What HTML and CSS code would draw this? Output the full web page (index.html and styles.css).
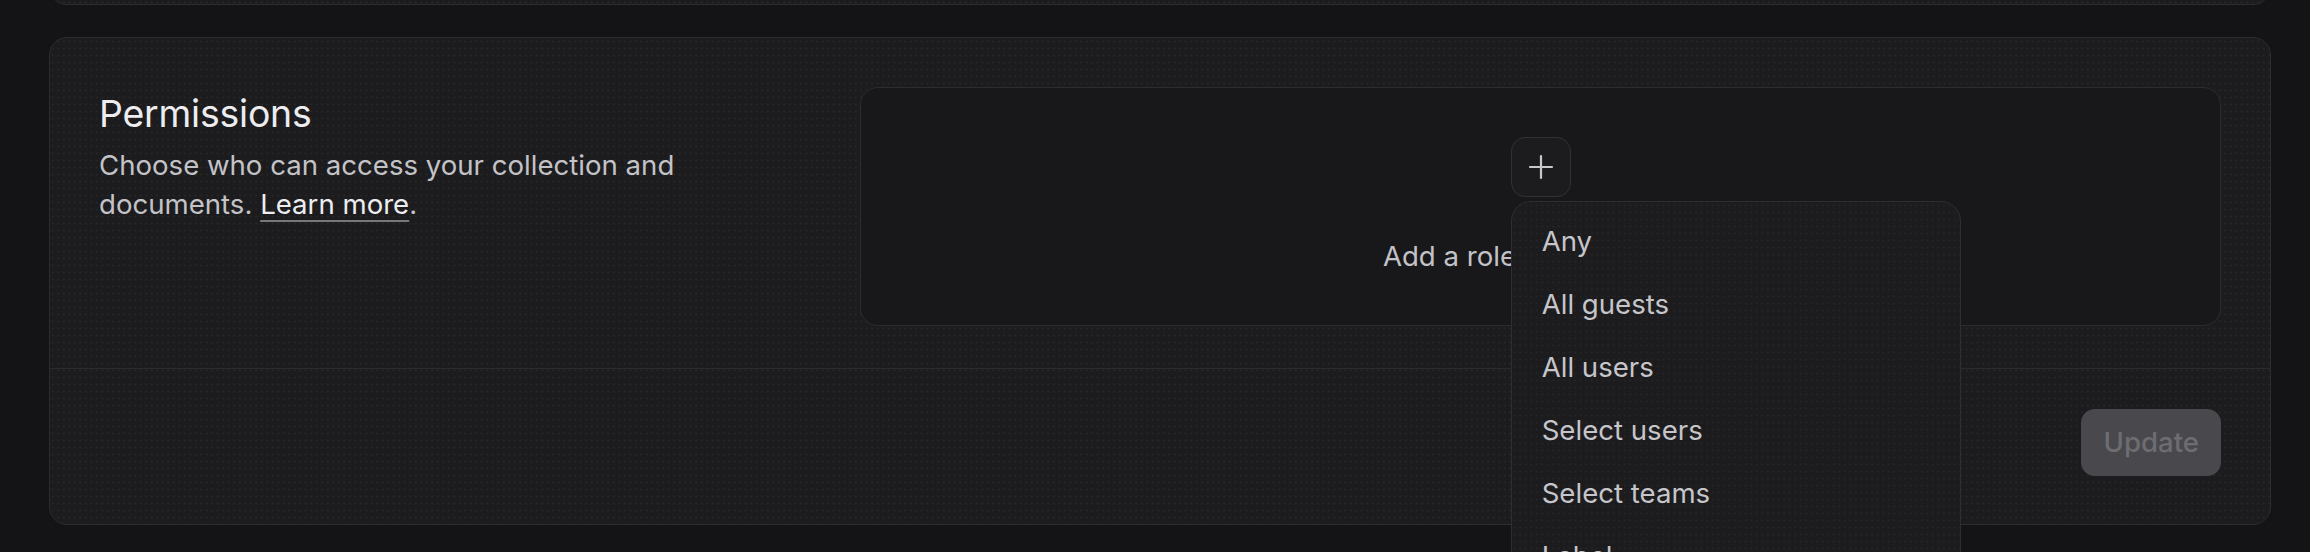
FILE: index.html
```html
<!DOCTYPE html>
<html lang="en">
<head>
<meta charset="utf-8">
<title>Permissions</title>
<link rel="stylesheet" href="styles.css">
</head>
<body>
<div class="page">
  <div class="card card-prev"></div>
  <section class="card">
    <div class="card-body">
      <div class="intro">
        <h2 class="title">Permissions</h2>
        <p class="desc">Choose who can access your collection and documents. <a class="link" href="#">Learn more</a>.</p>
      </div>
      <div class="roles">
        <div class="add-wrap">
          <button class="add-btn" type="button" aria-label="Add role">
            <svg class="plus" viewBox="0 0 28 28" width="28" height="28"><path d="M14 3v22M3 14h22" stroke="currentColor" stroke-width="2.2" stroke-linecap="round" fill="none"/></svg>
          </button>
          <ul class="menu">
            <li class="menu-item">Any</li>
            <li class="menu-item">All guests</li>
            <li class="menu-item">All users</li>
            <li class="menu-item">Select users</li>
            <li class="menu-item">Select teams</li>
            <li class="menu-item">Label</li>
            <li class="menu-item">Custom permission</li>
          </ul>
        </div>
        <p class="empty">Add a role to get started</p>
      </div>
    </div>
    <div class="card-footer">
      <button class="update" type="button" disabled>Update</button>
    </div>
  </section>
</div>
</body>
</html>
```

FILE: styles.css
```css
html, body {
  margin: 0;
  padding: 0;
  height: 552px;
  overflow: hidden;
  background: #141416;
}
body {
  font-family: Inter, "Noto Sans", sans-serif;
  color: #c3c3c7;
}
.page {
  padding: 0 39px 0 49px;
}
.card {
  background-color: #1c1c1f;
  background-image: radial-gradient(circle, rgba(255,255,255,0.05) 0.9px, transparent 1.2px);
  background-size: 5.5px 7px;
  border: 1.5px solid #2c2c30;
  border-radius: 18px;
  margin-top: 32px;
}
.card-prev {
  height: 40px;
  margin-top: -37px;
}
.card-body {
  display: grid;
  grid-template-columns: 1fr 2fr;
  column-gap: 81px;
  padding: 49px 49px 42px;
  border-bottom: 1.5px solid #2c2c30;
}
.title {
  margin: 0;
  font-size: 37.4px;
  font-weight: 400;
  line-height: 54px;
  color: #ededf0;
  letter-spacing: -0.2px;
}
.desc {
  margin: 5px 0 0;
  font-size: 27.6px;
  line-height: 38.5px;
  color: #c3c3c7;
}
.link {
  color: #ededf0;
  text-decoration: underline;
  text-decoration-color: #76767b;
  text-decoration-thickness: 2px;
  text-underline-offset: 6px;
}
.roles {
  background-color: #18181b;
  border: 1.5px solid #2c2c30;
  border-radius: 18px;
  padding: 49px 20px;
  display: flex;
  flex-direction: column;
  align-items: center;
  gap: 40px;
}
.add-wrap {
  position: relative;
  z-index: 2;
}
.add-btn {
  width: 60px;
  height: 60px;
  display: flex;
  align-items: center;
  justify-content: center;
  padding: 0;
  background: #1c1c1f;
  border: 1.5px solid #323236;
  border-radius: 14px;
  color: #c8c8cc;
}
.plus {
  display: block;
}
.menu {
  position: absolute;
  left: 0;
  top: 64px;
  width: 450px;
  margin: 0;
  padding: 8px 0;
  list-style: none;
  background-color: #1c1c1f;
  background-image: radial-gradient(circle, rgba(255,255,255,0.045) 0.9px, transparent 1.2px);
  background-size: 5.5px 7px;
  border: 1.5px solid #2e2e32;
  border-radius: 20px;
  box-sizing: border-box;
}
.menu-item {
  height: 63px;
  padding: 0 30px;
  font-size: 27.6px;
  line-height: 63px;
  color: #c6c6ca;
}
.empty {
  margin: 0;
  font-size: 27.6px;
  line-height: 38.5px;
  color: #c3c3c7;
}
.card-footer {
  display: flex;
  justify-content: flex-end;
  padding: 40px 49px 48px;
}
.update {
  height: 67px;
  padding: 0 22px;
  font-family: Inter, "Noto Sans", sans-serif;
  font-size: 27.6px;
  font-weight: 500;
  color: #6d6d72;
  background: #48484d;
  border: none;
  border-radius: 14px;
}
```
